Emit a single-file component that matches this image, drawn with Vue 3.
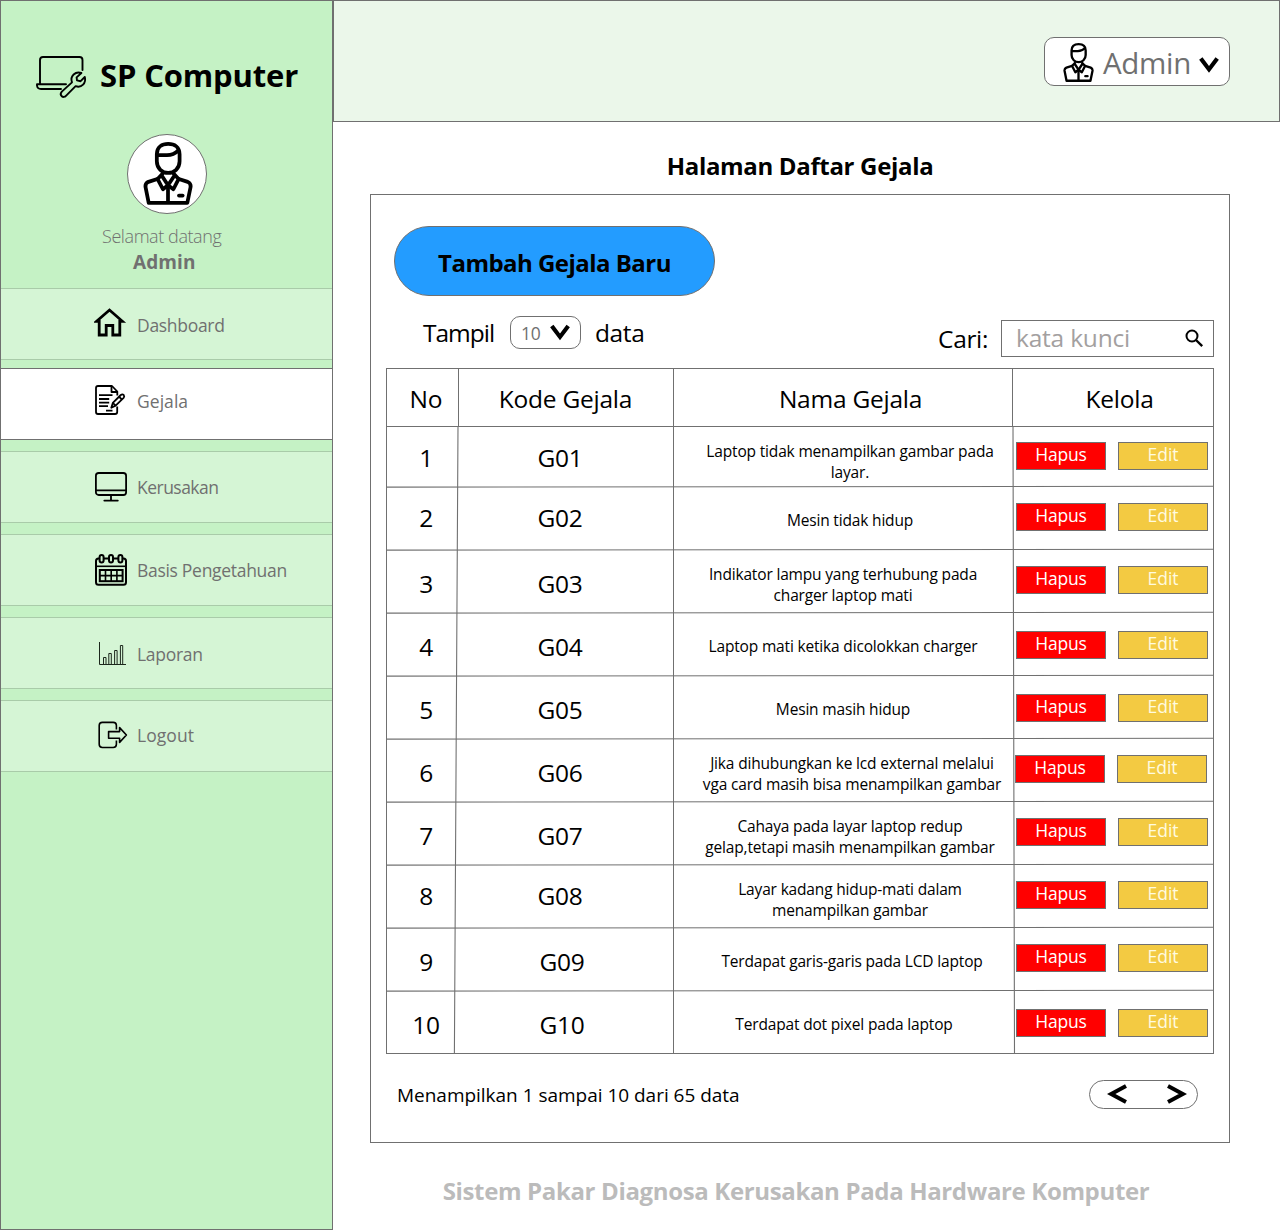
<script setup>
const menu = [
  { id: 'home', label: 'Dashboard', iconTop: 16, textTop: 23 },
  { id: 'note', label: 'Gejala', iconTop: 14, textTop: 19, active: true },
  { id: 'screen', label: 'Kerusakan', iconTop: 18, textTop: 22 },
  { id: 'calendar', label: 'Basis Pengetahuan', iconTop: 18, textTop: 22 },
  { id: 'chart', label: 'Laporan', iconTop: 18, textTop: 23 },
  { id: 'exit', label: 'Logout', iconTop: 17, textTop: 21 },
]

// top / nameTop / actTop: vertical offsets inside the row; nameX: horizontal nudge of the description
const rows = [
  { no: 1, kode: 'G01', nama: ['Laptop tidak menampilkan gambar pada', 'layar.'], h: 60, top: 14, nameTop: 14, nameX: 0, actTop: 15, actX: 0 },
  { no: 2, kode: 'G02', nama: ['Mesin tidak hidup'], h: 63, top: 14, nameTop: 23, nameX: 0, actTop: 16, actX: 0 },
  { no: 3, kode: 'G03', nama: ['Indikator lampu yang terhubung pada', 'charger laptop mati'], h: 63, top: 17, nameTop: 14, nameX: -7, actTop: 16, actX: 0 },
  { no: 4, kode: 'G04', nama: ['Laptop mati ketika dicolokkan charger'], h: 63, top: 17, nameTop: 23, nameX: -7, actTop: 18, actX: 0 },
  { no: 5, kode: 'G05', nama: ['Mesin masih hidup'], h: 63, top: 17, nameTop: 23, nameX: -7, actTop: 18, actX: 0 },
  { no: 6, kode: 'G06', nama: ['Jika dihubungkan ke lcd external melalui', 'vga card masih bisa menampilkan gambar'], h: 63, top: 17, nameTop: 14, nameX: 2, actTop: 16, actX: -1 },
  { no: 7, kode: 'G07', nama: ['Cahaya pada layar laptop redup', 'gelap,tetapi masih menampilkan gambar'], h: 63, top: 17, nameTop: 14, nameX: 0, actTop: 16, actX: 0 },
  { no: 8, kode: 'G08', nama: ['Layar kadang hidup-mati dalam', 'menampilkan gambar'], h: 63, top: 14, nameTop: 14, nameX: 0, actTop: 16, actX: 0 },
  { no: 9, kode: 'G09', nama: ['Terdapat garis-garis pada LCD laptop'], h: 63, top: 17, nameTop: 23, nameX: 2, actTop: 16, actX: 0, kodeX: 2 },
  { no: 10, kode: 'G10', nama: ['Terdapat dot pixel pada laptop'], h: 62, top: 17, nameTop: 23, nameX: -6, actTop: 18, actX: 0, kodeX: 2 },
]
const rules = [118, 181, 244, 307, 370, 433, 496, 559, 622]
</script>

<template>
  <svg class="defs" width="0" height="0">
    <symbol id="user" viewBox="0 0 48 62">
      <g fill="none" stroke="#000" stroke-width="3.7" stroke-linejoin="round">
        <path d="M13 12 C13 5 18 1.9 24.2 1.9 S35.4 5 35.4 12 V19 C35.4 26 30 30.5 24.2 30.5 S13 26 13 19 Z" />
        <path d="M13 13 H23 C29 13 32 10.5 34.5 8" />
        <path d="M15 36 L4.8 39.2 Q1.3 40.8 1.9 44.5 L5 60 H43 L46.2 44.5 Q46.8 40.8 43.4 39.2 L33.2 36" />
        <path d="M24 43 V60" />
        <path d="M19.3 30.5 L13.8 36.5 L19 46.5 L24 42.5 L17.8 33" />
        <path d="M29 30.5 L34.4 36.5 L29.3 46.5 L24 42.5 L30.4 33" />
        <path d="M34.8 52.7 H38.4" stroke-linecap="round" />
      </g>
    </symbol>
    <symbol id="home" viewBox="0 0 34 34">
      <path d="M2.6 16.3 L15.5 5 L28.4 16.3 H25.8 V30 H18.8 V20.5 H12.2 V30 H5.2 V16.3 Z" fill="none" stroke="#000" stroke-width="2.8" />
    </symbol>
    <symbol id="note" viewBox="0 0 34 34">
      <g fill="none" stroke="#000" stroke-width="1.8" stroke-linejoin="round">
        <path d="M23.3 12.5 V8.5 L18 3 H4 Q2 3 2 5 V29 Q2 31 4 31 H21 Q23.2 31 23.2 29 V23.5" />
        <path d="M17.5 3 V9 H23.3" />
        <path d="M5 12.2 H18.5 M5 16 H15.2 M5 19.6 H15.2 M5 23.2 H14 M12 27.7 H18.5" />
        <path d="M17.3 24.7 L18.8 19.9 L26.8 12 Q28.4 10.8 29.7 12 Q30.8 13.4 29.6 14.8 L21.6 22.6 Z" />
        <path d="M25 13.6 L27.8 16.5 M18.8 19.9 L21.6 22.6" />
      </g>
    </symbol>
    <symbol id="screen" viewBox="0 0 34 34">
      <g fill="none" stroke="#000" stroke-width="1.8">
        <rect x="1.9" y="3" width="30.2" height="22" rx="2.8" />
        <path d="M2 20.3 H32 M17 25 V30.4" />
        <path d="M10.3 30.6 H23.8" stroke-linecap="round" />
      </g>
    </symbol>
    <symbol id="calendar" viewBox="0 0 34 34">
      <g fill="none" stroke="#000" stroke-width="2">
        <rect x="2" y="5.6" width="30" height="26.2" rx="2.5" />
        <path d="M2 13.3 H32" stroke-width="1.6" />
        <rect x="5.8" y="17" width="22.8" height="11.2" />
        <path d="M5.8 22.6 H28.6 M11.5 17 V28.2 M17.2 17 V28.2 M22.9 17 V28.2" stroke-width="1.6" />
        <g fill="#d5f5d5">
          <rect x="5.6" y="1.9" width="4" height="7.6" rx="2" />
          <rect x="15" y="1.9" width="4" height="7.6" rx="2" />
          <rect x="24.4" y="1.9" width="4" height="7.6" rx="2" />
        </g>
      </g>
    </symbol>
    <symbol id="chart" viewBox="0 0 34 34">
      <g fill="none" stroke="#1c271c" stroke-width="1">
        <path d="M5.5 6 V28.5 H32" />
        <path d="M9.5 28.5 V21.5 H12 V28.5 M14.8 28.5 V17.5 H17.3 V28.5 M20.6 28.5 V14.5 H23.1 V28.5 M26.4 28.5 V9.5 H28.7 V28.5" />
      </g>
    </symbol>
    <symbol id="exit" viewBox="0 0 34 34">
      <g fill="none" stroke="#000" stroke-width="1.6" stroke-linejoin="round">
        <path d="M22.4 11.5 V7.5 Q22.4 4.4 19.2 4.4 H8.4 Q5.2 4.4 5.2 7.5 V26.3 Q5.2 29.5 8.4 29.5 H19.2 Q22.4 29.5 22.4 26.3 V22.5" />
        <path d="M14.6 13.6 H25.6 V9.6 L32.4 17 L25.6 24.4 V20.3 H14.6 Z" />
      </g>
    </symbol>
    <symbol id="down" viewBox="0 0 20 16">
      <path d="M1.8 1.6 L10 12.4 L18.2 1.6" fill="none" stroke="#000" stroke-width="4.2" />
    </symbol>
  </svg>

  <div class="page">
    <aside class="sidebar">
      <div class="brand">
        <svg width="52" height="44" viewBox="0 0 52 44">
          <g fill="none" stroke="#000" stroke-width="1.9" stroke-linejoin="round" stroke-linecap="round">
            <path d="M4 27.5 V4 Q4 1 7 1 H43.5 Q46.5 1 46.5 4 V14" />
            <path d="M30 28.2 H1 V29.5 Q1.4 33 5 33 H25" />
            <path d="M45.4 17 C39.5 14.8 33.7 20 36 26.4 L25.8 35.6 C22.8 39.2 27.2 43 30.2 39.6 L39.6 30.2 C45.6 32.2 50.4 27.2 48.8 21 L44.6 25.2 L41 24.4 L40.6 21.4 Z" />
          </g>
        </svg>
        <span>SP Computer</span>
      </div>
      <div class="avatar"><svg width="50" height="63"><use href="#user" /></svg></div>
      <p class="hello">Selamat datang</p>
      <p class="who">Admin</p>
      <nav>
        <a v-for="m in menu" :key="m.id" class="item" :class="{ active: m.active }">
          <svg width="34" height="34" :style="{ marginTop: m.iconTop + 'px' }"><use :href="'#' + m.id" /></svg>
          <span :class="m.id" :style="{ marginTop: m.textTop + 'px' }">{{ m.label }}</span>
        </a>
      </nav>
    </aside>

    <div class="main">
      <header>
        <div class="account">
          <svg width="31" height="39"><use href="#user" /></svg>
          <span>Admin</span>
          <svg class="caret" width="20" height="16"><use href="#down" /></svg>
        </div>
      </header>

      <h1>Halaman Daftar Gejala</h1>

      <section class="panel">
        <button class="add">Tambah Gejala Baru</button>
        <div class="tools">
          <span class="show">Tampil</span>
          <div class="select"><span>10</span><svg width="20" height="17"><use href="#down" /></svg></div>
          <span class="data">data</span>
          <span class="find">Cari:</span>
          <div class="search">
            <span>kata kunci</span>
            <svg width="19" height="19" viewBox="0 0 19 19" fill="none" stroke="#000">
              <circle cx="7" cy="7" r="5.5" stroke-width="2" />
              <path d="M11 11 L17.2 17.2" stroke-width="2.4" />
            </svg>
          </div>
        </div>

        <div class="table">
          <svg class="grid" width="828" height="686" viewBox="0 0 828 686">
            <g fill="none" stroke="#707070" stroke-width="1">
              <path d="M0 58.5 H828 M72.5 0 V58 M287.5 0 V685 M626.5 0 V58" />
              <path d="M72 58 L68.4 685 M627 58 L628.5 685" stroke-width="1.1" />
              <path v-for="y in rules" :key="y" :d="`M0 ${y + 1.1} L828 ${y + 0.3}`" stroke-width="1.1" />
            </g>
          </svg>
          <div class="head">
            <span>No</span><span>Kode Gejala</span><span>Nama Gejala</span><span>Kelola</span>
          </div>
          <div v-for="r in rows" :key="r.no" class="row" :style="{ height: r.h + 'px' }">
            <span class="num" :style="{ paddingTop: r.top + 'px' }">{{ r.no }}</span>
            <span class="num" :style="{ paddingTop: r.top + 'px', paddingLeft: (r.kodeX || 0) * 2 + 'px' }">{{ r.kode }}</span>
            <div class="name" :style="{ paddingTop: r.nameTop + 'px', paddingLeft: 32 + r.nameX + 'px', paddingRight: 3 - r.nameX + 'px' }">
              <div v-for="l in r.nama" :key="l">{{ l }}</div>
            </div>
            <div class="acts" :style="{ paddingTop: r.actTop + 'px', marginLeft: r.actX + 'px' }">
              <button class="del">Hapus</button><button class="edit">Edit</button>
            </div>
          </div>
        </div>

        <div class="foot">
          <span>Menampilkan 1 sampai 10 dari 65 data</span>
          <div class="pager">
            <svg width="20" height="20" viewBox="0 0 20 20"><path d="M19 2 L4.2 10 L19 18" fill="none" stroke="#000" stroke-width="4" /></svg>
            <svg width="20" height="20" viewBox="0 0 20 20"><path d="M1 2 L15.8 10 L1 18" fill="none" stroke="#000" stroke-width="4" /></svg>
          </div>
        </div>
      </section>

      <footer>Sistem Pakar Diagnosa Kerusakan Pada Hardware Komputer</footer>
    </div>
  </div>
</template>

<style>
body { margin: 0; background: #fff; }
</style>

<style scoped>
* { box-sizing: border-box; }
.defs { position: absolute; }
.page {
  display: flex;
  width: 1280px;
  height: 1230px;
  overflow: hidden;
  font-family: "Open Sans", "Noto Sans", sans-serif;
  color: #000;
}
p, h1 { margin: 0; }
button { font-family: inherit; margin: 0; padding: 0; white-space: nowrap; }
svg { flex: none; display: block; }

.sidebar { width: 333px; height: 1230px; background: #c5f2c5; border: 1px solid #707070; }
.brand { display: flex; height: 133px; padding: 55px 0 0 35px; }
.brand span { margin: -3px 0 0 12px; font-size: 31px; line-height: 45px; font-weight: 700; letter-spacing: -0.15px; white-space: nowrap; }
.avatar {
  display: flex;
  width: 80px;
  height: 80px;
  margin-left: 126px;
  padding: 7px 0 0 15px;
  background: #fff;
  border: 1px solid #707070;
  border-radius: 50%;
}
.hello { padding: 9px 0 0 101px; font-size: 18px; line-height: 26px; font-weight: 300; letter-spacing: -0.42px; color: #707070; }
.who { padding-left: 132px; height: 39px; font-size: 19px; line-height: 27px; font-weight: 700; letter-spacing: 0.1px; color: #707070; }
nav { display: flex; flex-direction: column; gap: 11px; }
.item {
  display: flex;
  height: 72px;
  padding-left: 93px;
  background: #d5f5d5;
  border-top: 1px solid #a9cba9;
  border-bottom: 1px solid #a9cba9;
}
.item:first-child { margin-bottom: -3px; }
.item.active { background: #fff; border-color: #707070; }
.item span { margin-left: 9px; height: 26px; font-size: 17.5px; line-height: 26px; letter-spacing: -0.3px; color: #707070; white-space: nowrap; }
.item span.note, .item span.exit { letter-spacing: 0.05px; }
.item span.screen { letter-spacing: -0.52px; }

.main { width: 947px; }
header { display: flex; justify-content: flex-end; height: 122px; padding: 36px 49px 0 0; background: #ebf7ea; border: 1px solid #707070; }
.account { display: flex; width: 186px; height: 49px; padding: 5px 0 0 18px; background: #fff; border: 1px solid #707070; border-radius: 10px; }
.account span { margin: -1px 0 0 9px; width: 88px; font-size: 29.5px; line-height: 42px; letter-spacing: -0.3px; color: #707070; }
.account .caret { margin: 14px 0 0 8px; }

h1 { height: 72px; padding: 26px 13px 0 0; text-align: center; font-size: 24px; line-height: 35px; font-weight: 700; letter-spacing: -0.33px; }

.panel { width: 860px; height: 949px; margin-left: 37px; padding: 31px 15px 0; border: 1px solid #707070; }
.add {
  display: block;
  width: 321px;
  height: 70px;
  margin-left: 8px;
  padding-top: 2px;
  background: #239cff;
  border: 1px solid #707070;
  border-radius: 35px;
  color: #000;
  font-size: 24px;
  font-weight: 700;
  letter-spacing: -0.53px;
}
.tools { display: flex; height: 72px; font-size: 24.5px; line-height: 34px; padding-left: 37px; }
.show { width: 87px; margin-top: 20px; letter-spacing: -1px; }
.select { display: flex; width: 71px; height: 33px; margin-top: 20px; padding: 7px 0 0 10px; border: 1px solid #707070; border-radius: 10px; }
.select span { width: 29px; margin-top: -3px; font-size: 17.5px; line-height: 25px; letter-spacing: -0.2px; color: #707070; }
.data { margin: 20px 0 0 14px; letter-spacing: -0.4px; }
.find { margin: 26px 13px 0 auto; letter-spacing: -0.35px; }
.search { display: flex; justify-content: space-between; width: 213px; height: 37px; margin-top: 24px; padding: 0 9px 0 14px; border: 1px solid #707070; }
.search span { letter-spacing: -0.2px; color: #a3a0a0; }
.search svg { margin-top: 8px; }

.table { position: relative; height: 686px; border: 1px solid #707070; }
.grid { position: absolute; left: -1px; top: -1px; }
.head { display: grid; grid-template-columns: 78px 201px 369px 169px; height: 58px; padding-top: 13px; font-size: 24.5px; line-height: 33px; letter-spacing: -0.24px; text-align: center; }
.head span:first-child { letter-spacing: 0; }
.row { display: grid; grid-template-columns: 78px 190px 361px 197px; text-align: center; }
.num { font-size: 24.5px; line-height: 34px; letter-spacing: -0.3px; }
.name { font-size: 15.5px; line-height: 21px; letter-spacing: -0.17px; white-space: nowrap; }
.acts { display: flex; gap: 12px; }
.acts button { width: 90px; height: 28px; border: 1px solid #707070; color: #fff; font-size: 17.5px; line-height: 23px; padding-bottom: 3px; letter-spacing: -0.2px; }
.del { background: #f00; }
.edit { background: #f3ca42; }
.acts .edit { color: #fffbe0; letter-spacing: 0; }

.foot { display: flex; justify-content: space-between; padding: 26px 16px 0 11px; font-size: 19px; line-height: 31px; letter-spacing: -0.02px; }
.pager { display: flex; justify-content: space-between; width: 109px; height: 29px; padding: 3px 10px 0 17px; border: 1px solid #707070; border-radius: 15px; }

footer { padding: 30px 21px 0 0; text-align: center; font-size: 24px; line-height: 36px; font-weight: 700; letter-spacing: -0.35px; color: #bbb; }
</style>
